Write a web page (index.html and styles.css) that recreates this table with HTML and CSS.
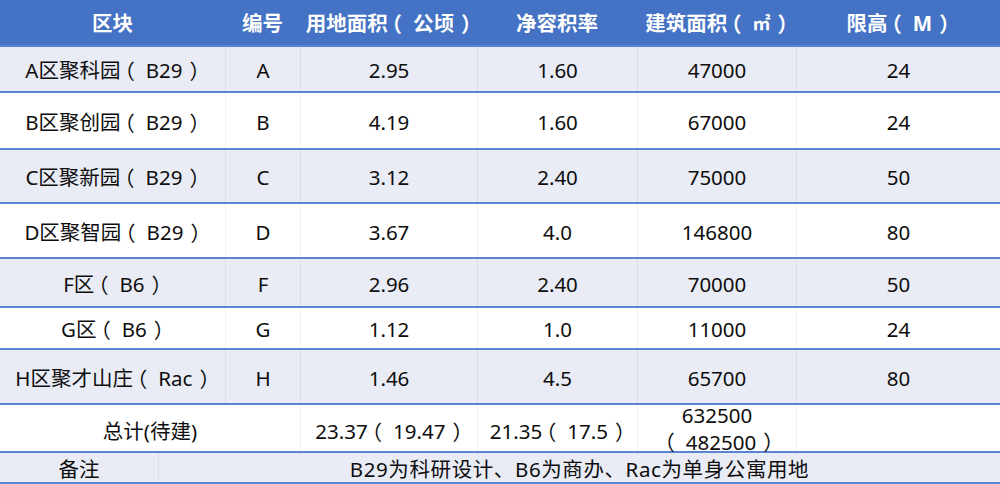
FILE: index.html
```html
<!DOCTYPE html>
<html lang="zh-CN">
<head>
<meta charset="utf-8">
<title>区块指标</title>
<link rel="stylesheet" href="styles.css">
</head>
<body>
<div class="sheet">
  <div class="row head h45">
    <div class="c">区块</div>
    <div class="c">编号</div>
    <div class="c">用地面积<span class="pl">（</span>公顷<span class="pr">）</span></div>
    <div class="c">净容积率</div>
    <div class="c">建筑面积<span class="pl">（</span><span class="sq">㎡</span><span class="pr">）</span></div>
    <div class="c">限高<span class="pl">（</span>M<span class="pr">）</span></div>
  </div>
  <div class="row alt h46">
    <div class="c">A区聚科园<span class="pl">（</span>B29<span class="pr">）</span></div>
    <div class="c">A</div>
    <div class="c">2.95</div>
    <div class="c">1.60</div>
    <div class="c">47000</div>
    <div class="c">24</div>
  </div>
  <div class="row h57">
    <div class="c">B区聚创园<span class="pl">（</span>B29<span class="pr">）</span></div>
    <div class="c">B</div>
    <div class="c">4.19</div>
    <div class="c">1.60</div>
    <div class="c">67000</div>
    <div class="c">24</div>
  </div>
  <div class="row alt h54">
    <div class="c">C区聚新园<span class="pl">（</span>B29<span class="pr">）</span></div>
    <div class="c">C</div>
    <div class="c">3.12</div>
    <div class="c">2.40</div>
    <div class="c">75000</div>
    <div class="c">50</div>
  </div>
  <div class="row h55">
    <div class="c">D区聚智园<span class="pl">（</span>B29<span class="pr">）</span></div>
    <div class="c">D</div>
    <div class="c">3.67</div>
    <div class="c">4.0</div>
    <div class="c">146800</div>
    <div class="c">80</div>
  </div>
  <div class="row alt h49">
    <div class="c">F区<span class="pl">（</span>B6<span class="pr">）</span></div>
    <div class="c">F</div>
    <div class="c">2.96</div>
    <div class="c">2.40</div>
    <div class="c">70000</div>
    <div class="c">50</div>
  </div>
  <div class="row h42">
    <div class="c">G区<span class="pl">（</span>B6<span class="pr">）</span></div>
    <div class="c">G</div>
    <div class="c">1.12</div>
    <div class="c">1.0</div>
    <div class="c">11000</div>
    <div class="c">24</div>
  </div>
  <div class="row alt h55">
    <div class="c">H区聚才山庄<span class="pl">（</span>Rac<span class="pr">）</span></div>
    <div class="c">H</div>
    <div class="c">1.46</div>
    <div class="c">4.5</div>
    <div class="c">65700</div>
    <div class="c">80</div>
  </div>
  <div class="row total h48">
    <div class="c">总计(待建)</div>
    <div class="c">23.37<span class="pl">（</span>19.47<span class="pr">）</span></div>
    <div class="c">21.35<span class="pl">（</span>17.5<span class="pr">）</span></div>
    <div class="c two">632500<br><span class="pl">（</span>482500<span class="pr">）</span></div>
    <div class="c"></div>
  </div>
  <div class="row alt note h33">
    <div class="c">备注</div>
    <div class="c wide">B29为科研设计、B6为商办、Rac为单身公寓用地</div>
  </div>
</div>
</body>
</html>
```

FILE: styles.css
```css
html, body {
  margin: 0;
  padding: 0;
  background: #ffffff;
}

.sheet {
  width: 1000px;
  font-family: "Noto Sans", "Noto Sans CJK SC", sans-serif;
  font-size: 20.5px;
  color: #0d0d0d;
}

.row {
  display: grid;
  grid-template-columns: 225px 75px 177px 160px 159px 1fr;
  box-sizing: border-box;
  border-top: 2px solid #5a84cf;
  background: #ffffff;
}

.row.alt {
  background: #e9ebf5;
}

.row.head {
  border-top: none;
  background: #4472c4;
  color: #ffffff;
  font-weight: bold;
}

.row.total {
  grid-template-columns: 300px 177px 160px 159px 1fr;
}

.row.note {
  grid-template-columns: 158px 1fr;
  border-bottom: 2px solid #5a84cf;
}

.c {
  display: flex;
  align-items: center;
  justify-content: center;
  text-align: center;
  white-space: nowrap;
  line-height: 24px;
  padding-top: 2px;
}

.row.head .c {
  padding-top: 0;
}

.row .c + .c {
  border-left: 1px solid rgba(120, 135, 190, 0.13);
}

.row.head .c + .c {
  border-left: none;
}

.pl,
.pr {
  font-family: "Noto Sans CJK SC", sans-serif;
  font-feature-settings: "halt" 1;
}

.pl {
  margin-left: 4px;
  margin-right: 11px;
}

.pr {
  margin-left: 7px;
}

.sq {
  font-size: 18px;
}

.c.two {
  display: block;
  line-height: 26px;
  padding-top: 0;
  margin-top: -3px;
}

.c.wide {
  letter-spacing: 0.6px;
}

.h45 { height: 45px; }
.h46 { height: 46px; }
.h57 { height: 57px; }
.h54 { height: 54px; }
.h55 { height: 55px; }
.h49 { height: 49px; }
.h42 { height: 42px; }
.h48 { height: 48px; }
.h33 { height: 33px; }
```
